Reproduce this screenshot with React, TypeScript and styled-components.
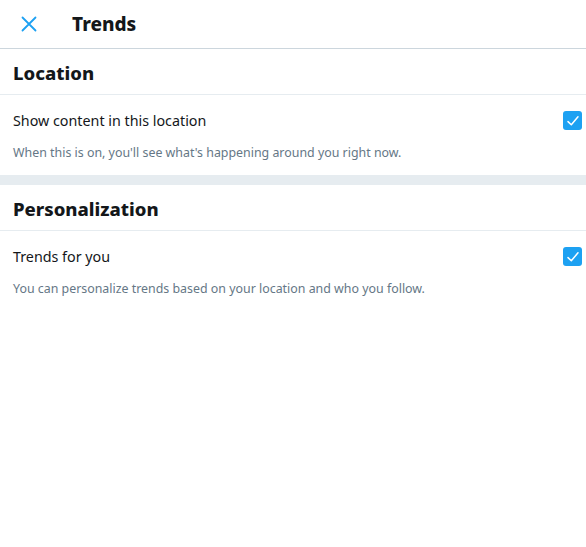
import React from 'react';
import styled, { createGlobalStyle } from 'styled-components';

const GlobalStyle = createGlobalStyle`
	html, body {
		margin: 0;
		padding: 0;
		background: #ffffff;
	}
	body {
		font-family: "Segoe UI", "Noto Sans", "Open Sans", sans-serif;
		color: #14171a;
	}
`;

const Page = styled.div`
	display: flex;
	flex-direction: column;
	width: 586px;
	min-height: 547px;
	background: #ffffff;
`;

const Header = styled.header`
	display: flex;
	align-items: center;
	height: 48px;
	padding: 0 15px;
	border-bottom: 1px solid #ccd6dd;
`;

const CloseButton = styled.button`
	display: flex;
	align-items: center;
	justify-content: center;
	width: 28px;
	height: 28px;
	padding: 0;
	border: none;
	background: none;
	color: #1da1f2;
	cursor: pointer;
`;

const Title = styled.h2`
	margin: 0 0 0 29px;
	font-size: 19px;
	font-weight: 800;
	line-height: 24px;
`;

const Section = styled.section`
	display: flex;
	flex-direction: column;
`;

const SectionTitle = styled.h3`
	margin: 0;
	padding: 2px 13px 0;
	height: 43px;
	display: flex;
	align-items: center;
	font-size: 18.5px;
	font-weight: 800;
	border-bottom: 1px solid #e6ecf0;
`;

const Option = styled.div`
	display: flex;
	flex-direction: column;
	padding: 16px 4px 13px 13px;
`;

const OptionRow = styled.label`
	display: flex;
	align-items: center;
	justify-content: space-between;
	font-size: 14.3px;
	line-height: 20px;
	cursor: pointer;
`;

const Box = styled.span`
	display: flex;
	align-items: center;
	justify-content: center;
	width: 19px;
	height: 19px;
	margin-top: -1px;
	border-radius: 3px;
	background: #1da1f2;
`;

const Hint = styled.p`
	margin: 13px 0 0;
	font-size: 12.4px;
	line-height: 18px;
	color: #657786;
`;

const Divider = styled.div`
	height: 10px;
	background: #e6ecf0;
`;

const Check = () => (
	<Box>
		<svg width="14" height="14" viewBox="0 0 14 14" fill="none">
			<path d="M2 7.6 L5.3 10.8 L12 2.8" stroke="#ffffff" strokeWidth="1.5" strokeLinecap="round" strokeLinejoin="round" />
		</svg>
	</Box>
);

const settings = [
	{
		title: 'Location',
		label: 'Show content in this location',
		hint: "When this is on, you'll see what's happening around you right now.",
	},
	{
		title: 'Personalization',
		label: 'Trends for you',
		hint: 'You can personalize trends based on your location and who you follow.',
	},
];

const App = () => (
	<>
		<GlobalStyle />
		<Page>
			<Header>
				<CloseButton aria-label="Close">
					<svg width="16" height="16" viewBox="0 0 16 16">
						<path d="M1.5 1.5 L14.5 14.5 M14.5 1.5 L1.5 14.5" stroke="currentColor" strokeWidth="1.8" strokeLinecap="round" />
					</svg>
				</CloseButton>
				<Title>Trends</Title>
			</Header>
			{settings.map((s, i) => (
				<React.Fragment key={s.title}>
					{i > 0 && <Divider />}
					<Section>
						<SectionTitle>{s.title}</SectionTitle>
						<Option>
							<OptionRow>
								{s.label}
								<Check />
							</OptionRow>
							<Hint>{s.hint}</Hint>
						</Option>
					</Section>
				</React.Fragment>
			))}
		</Page>
	</>
);

export default App;
